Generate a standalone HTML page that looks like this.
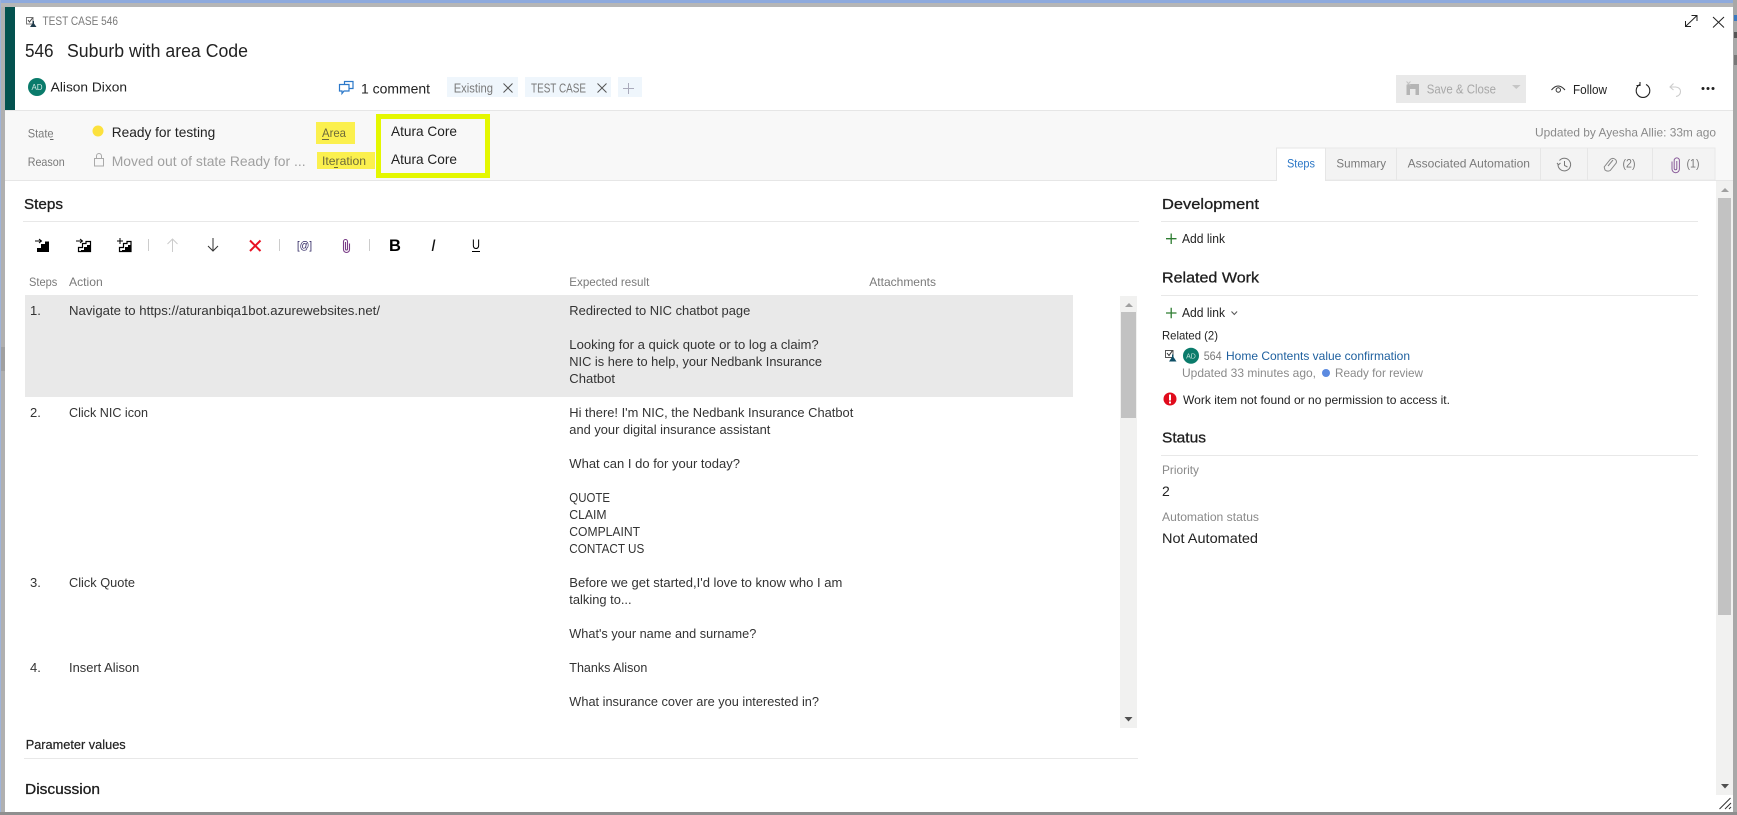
<!DOCTYPE html>
<html><head><meta charset="utf-8"><title>Test Case 546</title>
<style>
html,body{margin:0;padding:0;background:#fff;width:1737px;height:815px;overflow:hidden}
svg{display:block;position:absolute;left:0;top:0}
text{font-family:"Liberation Sans",Arial,sans-serif;font-size:13px;fill:#2b2b2b}
.g{fill:#7a7a7a;font-size:12px}
.h{font-size:15px;fill:#1e1e1e;stroke:#1e1e1e;stroke-width:.3px}
.m{font-size:14px;fill:#222}
.t{font-size:13px;fill:#333}
</style></head><body>
<svg width="1737" height="815" viewBox="0 0 1737 815" xmlns="http://www.w3.org/2000/svg">
<!-- surrounding -->
<rect width="1737" height="815" fill="#b0b0b0"/>
<rect x="0" y="0" width="1737" height="3" fill="#8eaadd"/>
<rect x="0" y="3" width="1737" height="4" fill="#b6b6b6"/>
<rect x="0" y="0" width="1" height="815" fill="#9fb3d8"/>
<rect x="1" y="347" width="4" height="24" fill="#a0a0a0"/>
<rect x="1733" y="0" width="4" height="815" fill="#a8a8a8"/>
<rect x="0" y="812" width="1737" height="3" fill="#8f8f8f"/>
<rect x="1734" y="15" width="3" height="6" fill="#3a78c0"/>
<rect x="1734" y="32" width="3" height="6" fill="#555"/>
<rect x="1734" y="55" width="3" height="10" fill="#777"/>
<!-- dialog -->
<rect x="5" y="7" width="1728" height="805" fill="#fff"/>
<rect x="5" y="7" width="10" height="103" fill="#04524f"/>
<rect x="5" y="110" width="1728" height="70" fill="#f8f8f8"/>
<rect x="5" y="110" width="1728" height="1" fill="#e6e6e6"/>
<rect x="5" y="180" width="1728" height="1" fill="#e6e6e6"/>

<!-- header -->
<g fill="none" stroke="#777" stroke-width="1"><rect x="26.500" y="17.500" width="6.500" height="6.500"/><path d="M28 20l1.500 2 3-4" stroke="#444"/></g>
<path d="M32.500 21h1.500v2.500l2.500 3.500h-6.500l2.500-3.500z" fill="#1f3a4a"/>
<text x="42.500" y="25" class="g" textLength="75.500" lengthAdjust="spacingAndGlyphs">TEST CASE 546</text>
<text x="25" y="57" style="font-size:18px;fill:#222" textLength="28.600" lengthAdjust="spacingAndGlyphs">546</text>
<text x="67" y="57" style="font-size:18px;fill:#222" textLength="181" lengthAdjust="spacingAndGlyphs">Suburb with area Code</text>

<circle cx="37" cy="87" r="9" fill="#0a7b6b"/>
<text x="37" y="90" text-anchor="middle" style="font-size:8px;fill:#cfe8e2">AD</text>
<text x="50.700" y="91.700" style="font-size:13px;fill:#222" textLength="76.300" lengthAdjust="spacingAndGlyphs">Alison Dixon</text>

<g fill="#fff" stroke="#2b78c9" stroke-width="1.200"><path d="M344.500 81.500h8.500v7h-8.500z"/><path d="M339.500 84.500h9.500v6.500h-5l-2 2.500v-2.500h-2.500z"/></g>
<text x="361" y="93.300" class="m" textLength="69" lengthAdjust="spacingAndGlyphs">1 comment</text>

<rect x="447" y="77" width="71" height="20" fill="#eff6fc"/>
<text x="453.700" y="92.300" class="g" textLength="39.300" lengthAdjust="spacingAndGlyphs" style="font-size:12.500px">Existing</text>
<path d="M503.500 83.500l9 9M512.500 83.500l-9 9" stroke="#555" stroke-width="1" fill="none"/>
<rect x="525" y="77" width="86" height="20" fill="#eff6fc"/>
<text x="531" y="92.300" class="g" textLength="55" lengthAdjust="spacingAndGlyphs" style="font-size:12.500px">TEST CASE</text>
<path d="M597.500 83.500l9 9M606.500 83.500l-9 9" stroke="#555" stroke-width="1" fill="none"/>
<rect x="618" y="77" width="24" height="20" fill="#eff6fc"/>
<path d="M623 88.500h11M628.500 83v11" stroke="#aab" stroke-width="1" fill="none"/>

<!-- top right icons -->
<g fill="none" stroke="#222" stroke-width="1"><path d="M1685.500 26.500l11.500-11M1691.500 15.500h5.500v5.500M1685.500 21v5.500h5.500"/></g>
<path d="M1713 17l11 10.500M1724 17l-11 10.500" stroke="#222" stroke-width="1" fill="none"/>

<rect x="1396" y="75" width="130" height="28" fill="#e9e9e9"/>
<path d="M1408 84h11v11h-12.500v-9.500z" fill="#b5b5b5"/><rect x="1410" y="89" width="5.500" height="6" fill="#e9e9e9"/><path d="M1406.500 81.500l4 4M1410.500 81.500l-4 4" stroke="#c4c4c4" stroke-width="1"/>
<text x="1426.700" y="93.300" style="font-size:13px;fill:#a8a8a8" textLength="69.300" lengthAdjust="spacingAndGlyphs">Save &amp; Close</text>
<path d="M1512 85h8.600l-4.300 4z" fill="#c6c6c6"/>

<path d="M1551.500 90q6.500-8 13.500 0" fill="none" stroke="#333" stroke-width="1"/><circle cx="1558.300" cy="90" r="2.200" fill="none" stroke="#333" stroke-width="1"/>
<text x="1573" y="94" style="font-size:13px;fill:#222" textLength="34" lengthAdjust="spacingAndGlyphs">Follow</text>
<path d="M1640 84.500a6.800 6.800 0 1 0 6 0M1640 82v3.500h-3.500" fill="none" stroke="#222" stroke-width="1.100"/>
<path d="M1673.500 83.500l-3.500 3.500 3.500 3M1670.500 87h5q5 .5 5 4.500t-4.500 5" fill="none" stroke="#ccc" stroke-width="1.100"/>
<circle cx="1703" cy="88.500" r="1.500" fill="#222"/><circle cx="1708" cy="88.500" r="1.500" fill="#222"/><circle cx="1713" cy="88.500" r="1.500" fill="#222"/>

<!-- fields -->
<text x="27.700" y="137.300" class="g" textLength="25.900" lengthAdjust="spacingAndGlyphs">State</text>
<rect x="50" y="139" width="3.500" height="1" fill="#666"/>
<text x="27.700" y="166" class="g" textLength="37" lengthAdjust="spacingAndGlyphs">Reason</text>
<circle cx="98" cy="131" r="5.500" fill="#fce13d"/>
<text x="111.700" y="137" class="m" textLength="103.600" lengthAdjust="spacingAndGlyphs">Ready for testing</text>
<rect x="94.500" y="158.500" width="9" height="7.500" fill="none" stroke="#aaa" stroke-width="1"/><path d="M96.500 158.500v-2.500a2.500 2.500 0 0 1 5 0v2.500" fill="none" stroke="#aaa" stroke-width="1"/>
<text x="111.700" y="166" style="font-size:14px;fill:#a0a0a0" textLength="193.900" lengthAdjust="spacingAndGlyphs">Moved out of state Ready for ...</text>

<rect x="316" y="122" width="39" height="22" fill="#fbf04e"/>
<text x="322" y="137" style="font-size:12px;fill:#6d6a3a" textLength="24" lengthAdjust="spacingAndGlyphs">Area</text>
<rect x="322" y="139" width="7" height="1" fill="#6d6a3a"/>
<rect x="317" y="152" width="58" height="17" fill="#fbf04e"/>
<text x="322" y="165" style="font-size:12px;fill:#6d6a3a" textLength="44" lengthAdjust="spacingAndGlyphs">Iteration</text>
<rect x="334" y="167" width="4" height="1" fill="#6d6a3a"/>

<rect x="378.500" y="116.500" width="109" height="59" fill="#f8f8f8" stroke="#e4f700" stroke-width="5"/>
<text x="391" y="136" class="m" textLength="66" lengthAdjust="spacingAndGlyphs">Atura Core</text>
<text x="391" y="164" class="m" textLength="66" lengthAdjust="spacingAndGlyphs">Atura Core</text>

<text x="1535" y="136.700" style="font-size:12px;fill:#8a8a8a" textLength="181" lengthAdjust="spacingAndGlyphs">Updated by Ayesha Allie: 33m ago</text>

<!-- tabs -->
<rect x="1325" y="148" width="390" height="32" fill="#f3f3f3" stroke="#e8e8e8" stroke-width="1"/>
<g stroke="#e6e6e6" stroke-width="1"><path d="M1396.500 148v32M1540.500 148v32M1587.500 148v32M1652.500 148v32"/></g>
<rect x="1276.500" y="148" width="49" height="33" fill="#fff"/>
<path d="M1276.500 181v-33h49v33" fill="none" stroke="#e6e6e6" stroke-width="1"/>
<text x="1287" y="167.700" style="font-size:12px;fill:#2a76c6" textLength="28" lengthAdjust="spacingAndGlyphs">Steps</text>
<text x="1336.400" y="167.700" class="g" textLength="49.600" lengthAdjust="spacingAndGlyphs">Summary</text>
<text x="1407.600" y="167.700" class="g" textLength="122.400" lengthAdjust="spacingAndGlyphs">Associated Automation</text>
<path d="M1559.500 160.500a6.300 6.300 0 1 1-1.500 4M1557 163l1.500 1.800 2-1.800M1564.500 161v4.500l3 1.500" fill="none" stroke="#777" stroke-width="1"/>
<path d="M1605 170l-.8-3 6-7.500q2-2 4.500-.5t1.500 4l-6 7.500q-2.500 1.500-5.200-.5zM1608 166l5-6" fill="none" stroke="#888" stroke-width="1"/>
<text x="1622.500" y="167.700" class="g" textLength="13" lengthAdjust="spacingAndGlyphs">(2)</text>
<path d="M1676.800 161v7.500a1.300 1.300 0 0 1-2.600 0v-8a2.600 2.600 0 0 1 5.200 0v8.500a3.700 3.700 0 0 1-7.400 0v-7.500" fill="none" stroke="#8a5c9a" stroke-width="1"/>
<text x="1686.500" y="167.700" class="g" textLength="13" lengthAdjust="spacingAndGlyphs">(1)</text>

<!-- steps -->
<text x="24" y="209" class="h" textLength="39" lengthAdjust="spacingAndGlyphs">Steps</text>
<rect x="23" y="221" width="1116" height="1" fill="#e8e8e8"/>

<!-- toolbar -->
<path d="M35 241h6M39 239l2.500 2-2.500 2" fill="none" stroke="#000" stroke-width="1"/>
<path d="M37 252v-4h4v-4h4v-2.500h4v10.500z" fill="#000"/>
<path d="M76 241h6M80 239l2.500 2-2.500 2" fill="none" stroke="#000" stroke-width="1"/>
<path d="M78.500 251.500v-4h4v-4h3.500v-2h4.500v10z" fill="#fff" stroke="#000" stroke-width="1.200"/>
<path d="M81 252v-2h3v-3h3v-2h3.500v7z" fill="#000"/>
<path d="M117 241h6M120 238v6" fill="none" stroke="#000" stroke-width="1"/>
<path d="M119.500 251.500v-4h4v-4h3.500v-2h4v10z" fill="#fff" stroke="#000" stroke-width="1.200"/>
<path d="M122 252v-2h3v-3h3v-2h3.500v7z" fill="#000"/>
<rect x="148" y="239" width="1" height="12" fill="#ccc"/>
<path d="M172.500 252v-13M167.500 244l5-5 5 5" fill="none" stroke="#ccc" stroke-width="1"/>
<path d="M213 238v13M208 246l5 5 5-5" fill="none" stroke="#333" stroke-width="1"/>
<path d="M250 240.500l10.500 10.500M260.500 240.500l-10.500 10.500" stroke="#e81123" stroke-width="2" fill="none"/>
<rect x="279" y="239" width="1" height="12" fill="#ccc"/>
<text x="297" y="249" style="font-size:11px;fill:#2c2460" textLength="15" lengthAdjust="spacingAndGlyphs">[@]</text>
<path d="M345.500 242v7a1 1 0 0 0 2 0v-7.500a2 2 0 0 0-4 0v8a3 3 0 0 0 6 0v-6" fill="none" stroke="#7a3d87" stroke-width="1.100"/>
<rect x="369" y="239" width="1" height="12" fill="#ccc"/>
<text x="389" y="251" style="font-size:16.500px;font-weight:bold;fill:#000">B</text>
<text x="431" y="251" style="font-size:16.500px;font-style:italic;fill:#111">I</text>
<text x="472" y="249" style="font-size:14px;fill:#000" textLength="8" lengthAdjust="spacingAndGlyphs">U</text>
<rect x="472" y="251" width="8" height="1" fill="#000"/>

<!-- table -->
<text x="29" y="286" class="g" textLength="28.300" lengthAdjust="spacingAndGlyphs">Steps</text>
<text x="69" y="286" class="g" textLength="33.700" lengthAdjust="spacingAndGlyphs">Action</text>
<text x="569.300" y="286" class="g" textLength="80" lengthAdjust="spacingAndGlyphs">Expected result</text>
<text x="869.300" y="286" class="g" textLength="66.700" lengthAdjust="spacingAndGlyphs">Attachments</text>

<rect x="25" y="295" width="1048" height="102" fill="#e9e9e9"/>

<text x="30" y="315" class="t">1.</text>
<text x="69" y="315" class="t" textLength="311" lengthAdjust="spacingAndGlyphs">Navigate to https://aturanbiqa1bot.azurewebsites.net/</text>
<text x="30" y="417" class="t">2.</text>
<text x="69" y="417" class="t" textLength="79" lengthAdjust="spacingAndGlyphs">Click NIC icon</text>
<text x="30" y="587" class="t">3.</text>
<text x="69" y="587" class="t" textLength="66" lengthAdjust="spacingAndGlyphs">Click Quote</text>
<text x="30" y="672" class="t">4.</text>
<text x="69" y="672" class="t" textLength="70.300" lengthAdjust="spacingAndGlyphs">Insert Alison</text>

<g>
<text x="569.300" y="315" class="t" textLength="181" lengthAdjust="spacingAndGlyphs">Redirected to NIC chatbot page</text>
<text x="569.300" y="349" class="t" textLength="249.400" lengthAdjust="spacingAndGlyphs">Looking for a quick quote or to log a claim?</text>
<text x="569.300" y="366" class="t" textLength="252.700" lengthAdjust="spacingAndGlyphs">NIC is here to help, your Nedbank Insurance</text>
<text x="569.300" y="383" class="t" textLength="45.700" lengthAdjust="spacingAndGlyphs">Chatbot</text>
<text x="569.300" y="417" class="t" textLength="284" lengthAdjust="spacingAndGlyphs">Hi there! I'm NIC, the Nedbank Insurance Chatbot</text>
<text x="569.300" y="434" class="t" textLength="201" lengthAdjust="spacingAndGlyphs">and your digital insurance assistant</text>
<text x="569.300" y="468" class="t" textLength="170.700" lengthAdjust="spacingAndGlyphs">What can I do for your today?</text>
<text x="569.300" y="502" class="t" textLength="40.700" lengthAdjust="spacingAndGlyphs">QUOTE</text>
<text x="569.300" y="519" class="t" textLength="37.300" lengthAdjust="spacingAndGlyphs">CLAIM</text>
<text x="569.300" y="536" class="t" textLength="70.700" lengthAdjust="spacingAndGlyphs">COMPLAINT</text>
<text x="569.300" y="553" class="t" textLength="75" lengthAdjust="spacingAndGlyphs">CONTACT US</text>
<text x="569.300" y="587" class="t" textLength="273" lengthAdjust="spacingAndGlyphs">Before we get started,I'd love to know who I am</text>
<text x="569.300" y="604" class="t" textLength="62.300" lengthAdjust="spacingAndGlyphs">talking to...</text>
<text x="569.300" y="638" class="t" textLength="187" lengthAdjust="spacingAndGlyphs">What's your name and surname?</text>
<text x="569.300" y="672" class="t" textLength="78" lengthAdjust="spacingAndGlyphs">Thanks Alison</text>
<text x="569.300" y="706" class="t" textLength="249.700" lengthAdjust="spacingAndGlyphs">What insurance cover are you interested in?</text>
</g>

<!-- inner scrollbar -->
<rect x="1120" y="296" width="17" height="432" fill="#f1f1f0"/>
<rect x="1121" y="312" width="15" height="106" fill="#c2c2c2"/>
<path d="M1125 307h8l-4-4z" fill="#a0a0a0"/>
<path d="M1124.500 717h8l-4 4.500z" fill="#505050"/>

<text x="25.700" y="749" style="font-size:13px;fill:#222;stroke:#222;stroke-width:.2px" textLength="100" lengthAdjust="spacingAndGlyphs">Parameter values</text>
<rect x="24" y="758" width="1114" height="1" fill="#e8e8e8"/>
<text x="25" y="794" class="h" textLength="75" lengthAdjust="spacingAndGlyphs">Discussion</text>

<!-- right panel -->
<text x="1162" y="209" class="h" textLength="97" lengthAdjust="spacingAndGlyphs">Development</text>
<rect x="1161" y="221" width="537" height="1" fill="#e8e8e8"/>
<path d="M1166 238.700h10.500M1171.200 233.500v10.500" stroke="#2e7d32" stroke-width="1.300" fill="none"/>
<text x="1182" y="243" class="t" style="fill:#222" textLength="43" lengthAdjust="spacingAndGlyphs">Add link</text>

<text x="1162" y="282.700" class="h" textLength="97" lengthAdjust="spacingAndGlyphs">Related Work</text>
<rect x="1161" y="295" width="537" height="1" fill="#e8e8e8"/>
<path d="M1166 313h10.500M1171.200 307.800v10.500" stroke="#2e7d32" stroke-width="1.300" fill="none"/>
<text x="1182" y="317" class="t" style="fill:#222" textLength="43" lengthAdjust="spacingAndGlyphs">Add link</text>
<path d="M1231.500 311.500l2.800 3 2.800-3" fill="none" stroke="#555" stroke-width="1"/>
<text x="1162" y="339.300" style="font-size:12px;fill:#222" textLength="56" lengthAdjust="spacingAndGlyphs">Related (2)</text>

<g fill="none" stroke="#555" stroke-width="1"><rect x="1165.500" y="350.500" width="7.500" height="7"/><path d="M1167 353l2 2.500 3.500-5" stroke="#333"/></g>
<path d="M1172 354.500h1.500v2.500l3 4.500h-7.500l3-4.500z" fill="#0e4f66"/>
<circle cx="1191" cy="355.700" r="8" fill="#0a7b6b"/>
<text x="1191" y="358.500" text-anchor="middle" style="font-size:7px;fill:#bfe0d9">AD</text>
<text x="1203.700" y="360" style="font-size:12px;fill:#7a7a7a" textLength="18" lengthAdjust="spacingAndGlyphs">564</text>
<text x="1226" y="360" style="font-size:12px;fill:#1d5f9e" textLength="184" lengthAdjust="spacingAndGlyphs">Home Contents value confirmation</text>
<text x="1182" y="377" style="font-size:12px;fill:#8a8a8a" textLength="134" lengthAdjust="spacingAndGlyphs">Updated 33 minutes ago,</text>
<circle cx="1326" cy="373" r="4" fill="#5b8ae0"/>
<text x="1335" y="377" style="font-size:12px;fill:#8a8a8a" textLength="88" lengthAdjust="spacingAndGlyphs">Ready for review</text>
<circle cx="1170" cy="399" r="6.500" fill="#e00b1c"/>
<rect x="1169" y="394.500" width="2" height="6" fill="#fff"/><rect x="1169" y="401.500" width="2" height="2" fill="#fff"/>
<text x="1183" y="404" style="font-size:12px;fill:#222" textLength="267" lengthAdjust="spacingAndGlyphs">Work item not found or no permission to access it.</text>

<text x="1162" y="442.700" class="h" textLength="44" lengthAdjust="spacingAndGlyphs">Status</text>
<rect x="1161" y="455" width="537" height="1" fill="#e8e8e8"/>
<text x="1162" y="474" class="g" style="fill:#8a8a8a" textLength="37" lengthAdjust="spacingAndGlyphs">Priority</text>
<text x="1162" y="496" class="m">2</text>
<text x="1162" y="521" class="g" style="fill:#8a8a8a" textLength="97" lengthAdjust="spacingAndGlyphs">Automation status</text>
<text x="1162" y="543" class="m" textLength="96" lengthAdjust="spacingAndGlyphs">Not Automated</text>

<!-- main scrollbar -->
<rect x="1716" y="181" width="17" height="614" fill="#f1f1f0"/>
<rect x="1718" y="198" width="13" height="417" fill="#c2c2c2"/>
<path d="M1721 192h8l-4-4z" fill="#a0a0a0"/>
<path d="M1721 784h8l-4 4.500z" fill="#505050"/>
<path d="M1719.500 809l11-11M1725 809l6-6M1729 809l2-2" stroke="#333" stroke-width="1" fill="none"/>
</svg>
</body></html>
